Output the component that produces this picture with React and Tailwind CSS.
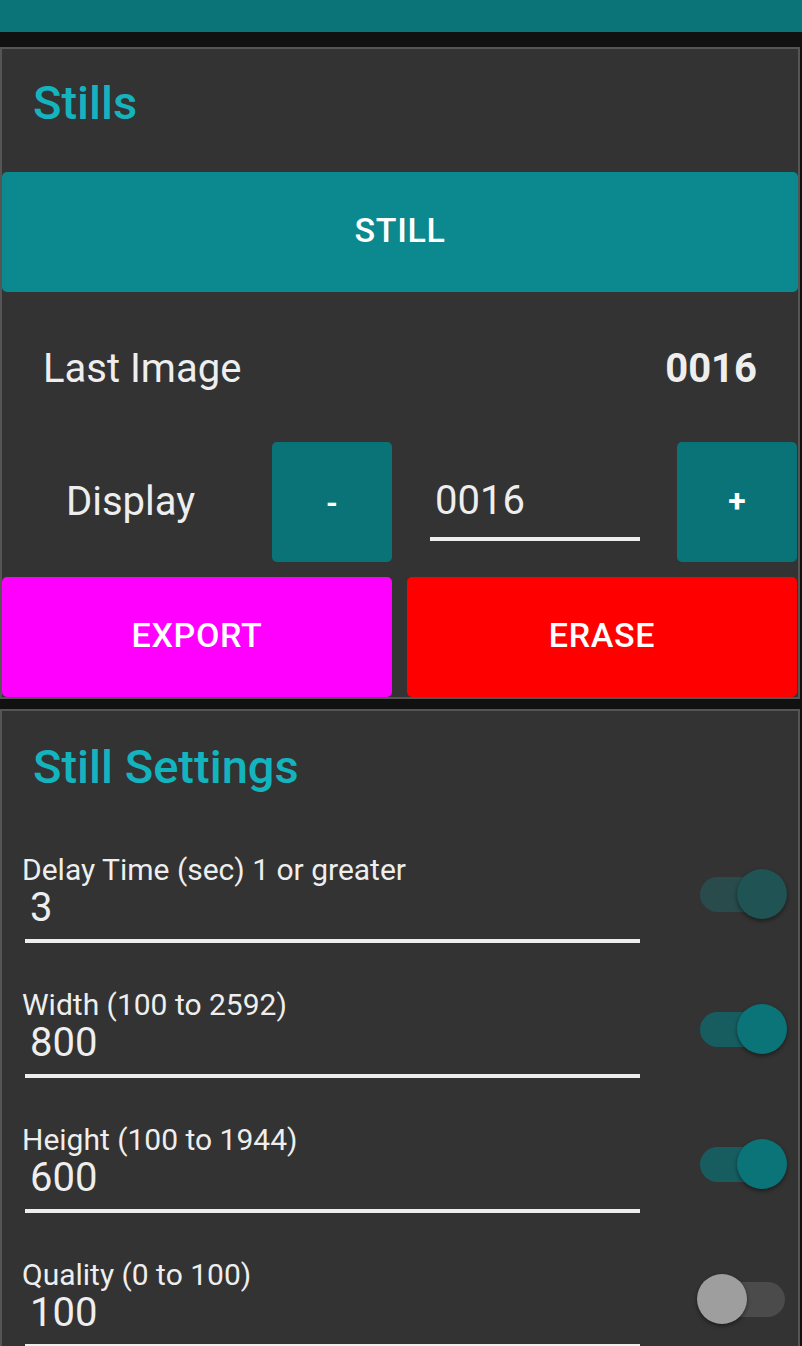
const settings = [
  { label: 'Delay Time (sec) 1 or greater', value: '3', toggle: 'disabled' },
  { label: 'Width (100 to 2592)', value: '800', toggle: 'on' },
  { label: 'Height (100 to 1944)', value: '600', toggle: 'on' },
  { label: 'Quality (0 to 100)', value: '100', toggle: 'off' },
];

const Toggle = ({ state }) => {
  const track =
    state === 'off' ? 'bg-[#4b4b4b]' : state === 'on' ? 'bg-[#175d60]' : 'bg-[#294b4c]';
  const thumb =
    state === 'off'
      ? 'left-0 bg-[#9e9e9e]'
      : state === 'on'
      ? 'left-[40px] bg-[#0a7479]'
      : 'left-[40px] bg-[#1f5354]';
  return (
    <div className="relative w-[90px] h-[50px]">
      <div className={`absolute left-[3px] top-[8px] w-[85px] h-[35px] rounded-full ${track}`} />
      <div
        className={`absolute top-0 w-[50px] h-[50px] rounded-full shadow-[0_2px_4px_rgba(0,0,0,0.45)] ${thumb}`}
      />
    </div>
  );
};

const App = () => {
  return (
    <div className="w-[802px] min-h-[1346px] bg-[#111111] font-['Roboto','Noto_Sans',sans-serif] overflow-hidden">
      <div className="h-[32px] bg-[#0a7479]" />
      <div className="h-[15px]" />

      {/* Stills card */}
      <div className="w-[800px] border-2 border-[#555555] bg-[#333333] flex flex-col">
        <div className="h-[123px] pt-[30px] pl-[31px]">
          <h1 className="text-[47px] leading-none font-medium text-[#14b4bf]">Stills</h1>
        </div>

        <button className="h-[120px] w-full pb-[4px] bg-[#0b898e] rounded-[5px] text-white text-[34px] font-medium tracking-[0.02em]">
          STILL
        </button>

        <div className="h-[150px] pt-[4px] flex items-center justify-between px-[41px]">
          <span className="text-[40px] leading-none text-[#eeeeee]">Last Image</span>
          <span className="text-[40px] leading-none font-bold text-[#eeeeee]">0016</span>
        </div>

        <div className="h-[120px] flex items-stretch">
          <div className="w-[270px] flex items-center pl-[64px]">
            <span className="text-[40px] leading-none text-[#eeeeee]">Display</span>
          </div>
          <button className="w-[120px] bg-[#0a7378] rounded-[5px] text-white text-[30px] font-bold">-</button>
          <div className="ml-[38px] w-[210px] flex flex-col justify-center">
            <span className="pl-[5px] mt-[18px] text-[40px] leading-none text-[#eeeeee]">0016</span>
            <div className="mt-[16px] h-[4px] bg-[#eeeeee]" />
          </div>
          <button className="ml-[37px] w-[120px] pb-[2px] bg-[#0a7378] rounded-[5px] text-white text-[32px] font-bold">+</button>
        </div>

        <div className="h-[15px]" />

        <div className="h-[120px] flex">
          <button className="w-[390px] pb-[3px] bg-[#ff00ff] rounded-[5px] text-white text-[34px] font-medium tracking-[0.02em]">
            EXPORT
          </button>
          <button className="ml-[15px] w-[390px] pb-[3px] bg-[#ff0000] rounded-[5px] text-white text-[34px] font-medium tracking-[0.02em]">
            ERASE
          </button>
        </div>
      </div>

      <div className="h-[10px]" />

      {/* Still Settings card */}
      <div className="w-[800px] border-2 border-b-0 border-[#555555] bg-[#333333] pt-[32px]">
        <h2 className="pl-[31px] text-[47px] leading-none font-medium text-[#14b4bf]">Still Settings</h2>
        <div className="mt-[65px] flex flex-col">
          {settings.map((s) => (
            <div key={s.label} className="h-[135px] flex items-start">
              <div className="pl-[20px] w-[638px] flex flex-col">
                <span className="text-[30px] leading-none text-[#eeeeee]">{s.label}</span>
                <span className="mt-[3px] pl-[8px] text-[40px] leading-none text-[#eeeeee]">{s.value}</span>
                <div className="mt-[11px] ml-[3px] w-[615px] h-[4px] bg-[#eeeeee]" />
              </div>
              <div className="ml-[57px] mt-[14px]">
                <Toggle state={s.toggle} />
              </div>
            </div>
          ))}
        </div>
      </div>
    </div>
  );
};

export default App;
